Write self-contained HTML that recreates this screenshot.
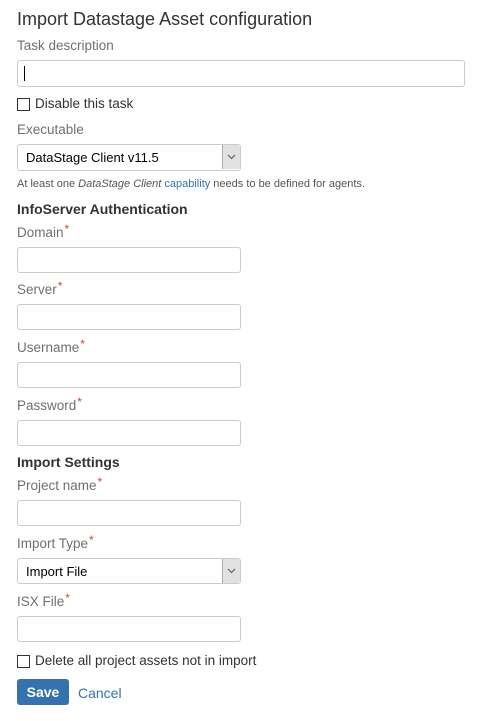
<!DOCTYPE html>
<html><head><style>
body{margin:0;width:481px;height:721px;background:#fff;font-family:"Liberation Sans",sans-serif;position:relative;overflow:hidden}
.a{position:absolute;white-space:nowrap}
.l{font-size:13.5px;color:#707070;line-height:16px}
.l i{font-style:normal;color:#d04437;font-size:12px;position:relative;top:-4px;margin-left:1px;line-height:0}
.in{position:absolute;left:17px;width:222px;height:24px;border:1px solid #ccc;border-radius:3px;background:#fff}
.h{font-size:14px;font-weight:bold;color:#333;line-height:16px}
.cb{position:absolute;left:17px;width:11px;height:11px;border:1px solid #333;background:#fff}
.t{font-size:13.5px;color:#333;line-height:16px}
.sel{position:absolute;left:17px;width:222px;height:24px;border:1px solid #ccc;border-radius:3px;background:#fff}
.sel span{position:absolute;left:8px;top:5px;font-size:13px;color:#000;line-height:16px}
.sel b{position:absolute;right:0;top:0;width:17px;height:24px;background:#e1e1e1;border-left:1px solid #adadad}
</style></head><body>
<div class="a" style="left:17px;top:8px;font-size:18px;color:#333;line-height:22px">Import Datastage Asset configuration</div>
<div class="a l" style="left:17px;top:38px">Task description</div>
<div class="in" style="top:60px;width:446px;height:25px"><div style="position:absolute;left:6px;top:5px;width:1px;height:15px;background:#000"></div></div>
<div class="cb" style="top:98px"></div>
<div class="a t" style="left:35px;top:96px">Disable this task</div>
<div class="a l" style="left:17px;top:122px">Executable</div>
<div class="sel" style="top:144px;height:25px"><span>DataStage Client v11.5</span><b><svg width="17" height="24" style="position:absolute;left:0;top:0"><path d="M5 10l3.5 3.5L12 10" stroke="#555" fill="none"/></svg></b></div>
<div class="a" style="left:17px;top:178px;font-size:11px;color:#555;line-height:12px">At least one <em>DataStage Client</em> <span style="color:#3572b0">capability</span> needs to be defined for agents.</div>
<div class="a h" style="left:17px;top:201px">InfoServer Authentication</div>
<div class="a l" style="left:17px;top:225px">Domain<i>*</i></div>
<div class="in" style="top:247px"></div>
<div class="a l" style="left:17px;top:282px">Server<i>*</i></div>
<div class="in" style="top:304px"></div>
<div class="a l" style="left:17px;top:340px">Username<i>*</i></div>
<div class="in" style="top:362px"></div>
<div class="a l" style="left:17px;top:398px">Password<i>*</i></div>
<div class="in" style="top:420px"></div>
<div class="a h" style="left:17px;top:454px">Import Settings</div>
<div class="a l" style="left:17px;top:478px">Project name<i>*</i></div>
<div class="in" style="top:500px"></div>
<div class="a l" style="left:17px;top:536px">Import Type<i>*</i></div>
<div class="sel" style="top:558px"><span>Import File</span><b><svg width="17" height="24" style="position:absolute;left:0;top:0"><path d="M5 10l3.5 3.5L12 10" stroke="#555" fill="none"/></svg></b></div>
<div class="a l" style="left:17px;top:594px">ISX File<i>*</i></div>
<div class="in" style="top:616px"></div>
<div class="cb" style="top:655px"></div>
<div class="a t" style="left:35px;top:653px">Delete all project assets not in import</div>
<div class="a" style="left:17px;top:679px;width:52px;height:26px;background:#3572b0;border-radius:3px;color:#fff;font-weight:bold;font-size:14px;line-height:26px;text-align:center">Save</div>
<div class="a" style="left:78px;top:685px;font-size:14px;color:#3572b0;line-height:16px">Cancel</div>
</body></html>
